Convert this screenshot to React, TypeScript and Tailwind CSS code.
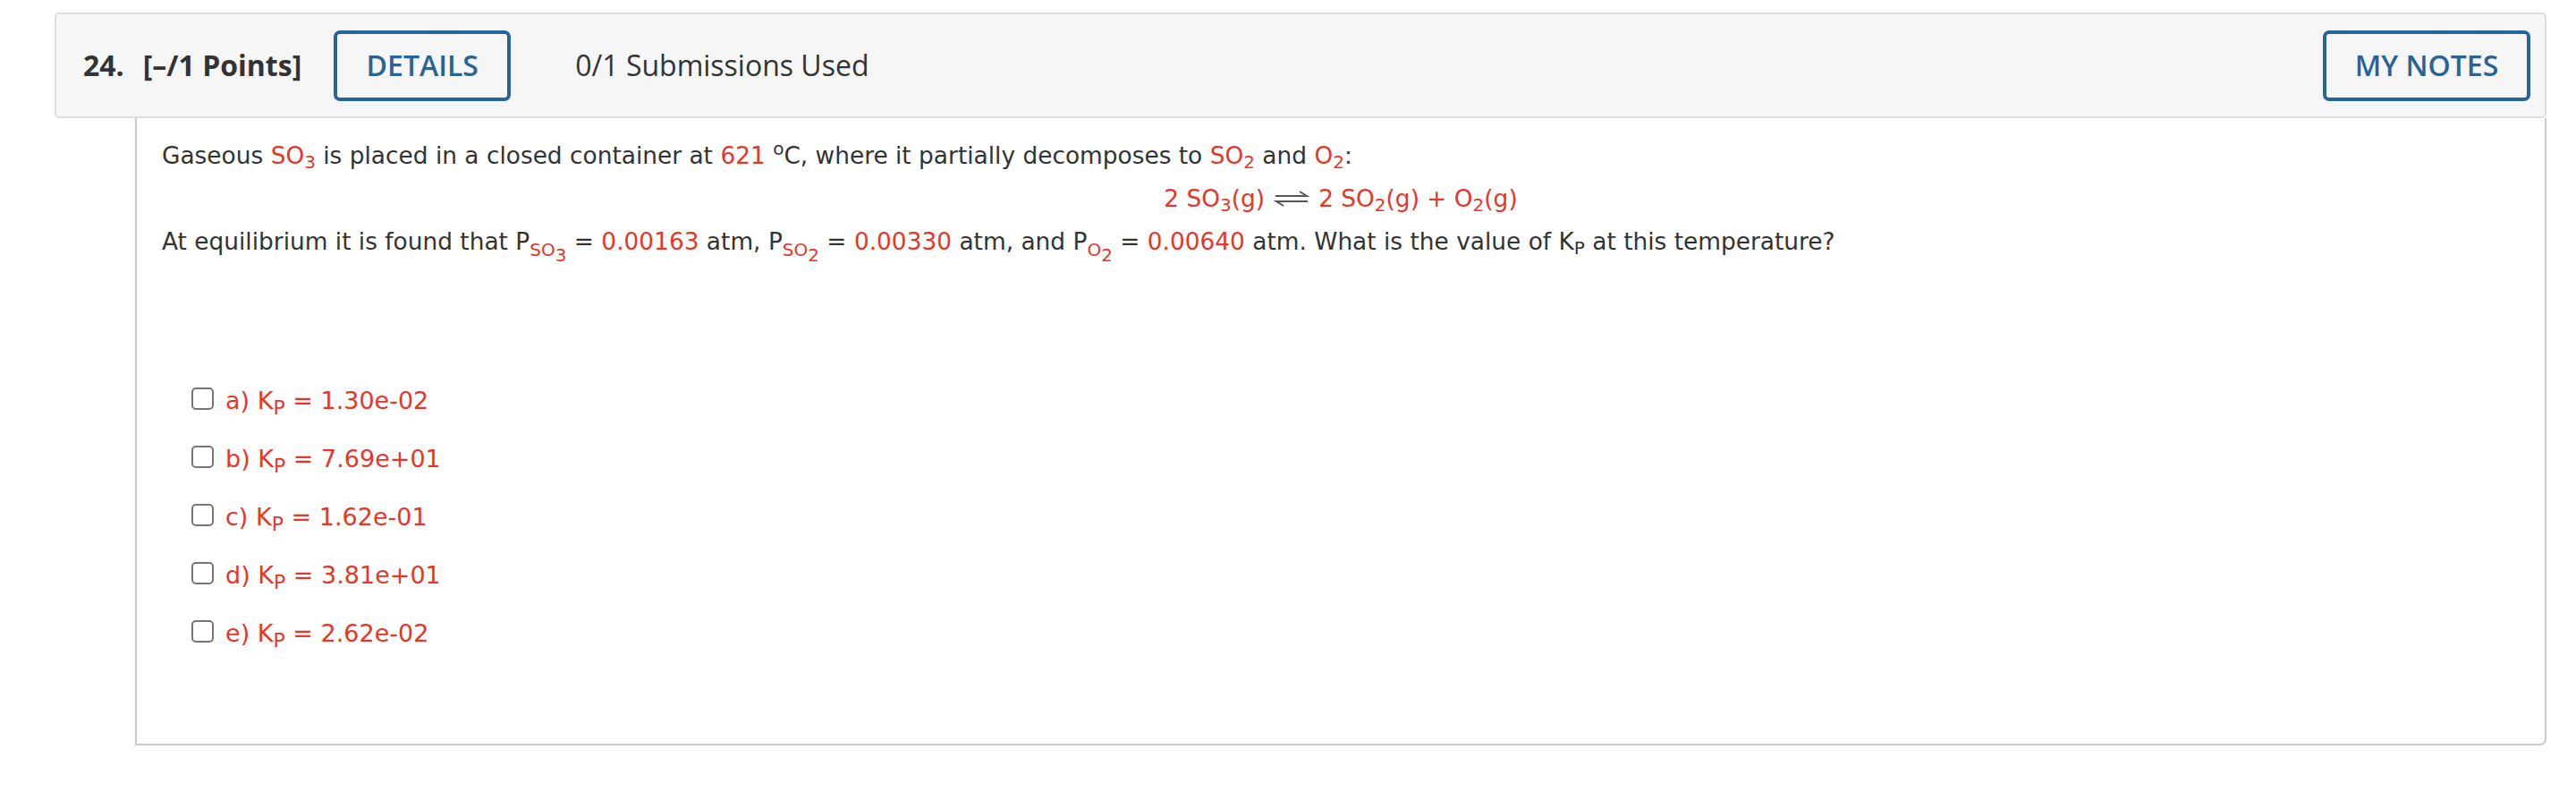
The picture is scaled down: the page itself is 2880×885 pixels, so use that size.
import React from 'react';

const red = 'text-[#e8352a]';

const Sub = ({ children }: { children: React.ReactNode }) => (
    <sub className="-bottom-[5px] text-[20px]">{children}</sub>
);

const Kp = ({ big = false }: { big?: boolean }) => (
    <>K<sub className={big ? '-bottom-[6px] text-[22px]' : '-bottom-[5px] text-[20px]'}>P</sub></>
);

// equilibrium harpoons, drawn since the font glyph is too narrow
const Harpoons = () => (
    <svg width="40" height="18" viewBox="0 0 40 18" className="inline-block align-baseline mx-[10px]" fill="none" stroke="#555" strokeWidth="2">
        <path d="M2 6 H37 L29 1" />
        <path d="M38 12 H3 L11 17" />
    </svg>
);

const options = ['1.30e-02', '7.69e+01', '1.62e-01', '3.81e+01', '2.62e-02'];
const letters = ['a', 'b', 'c', 'd', 'e'];

const OutlineButton = ({ label, width }: { label: string; width: string }) => (
    <button
        className={`${width} h-[79px] flex items-center justify-center border-4 border-[#2a6496] rounded-[7px] text-[#2a6496] text-[32px] font-semibold bg-transparent`}
        style={{ fontFamily: '"Open Sans", sans-serif' }}
    >
        {label}
    </button>
);

export default function App() {
    return (
        <div className="w-full h-[885px] bg-white pt-[14px] pl-[61px] pr-[33px] overflow-hidden">
            {/* question header */}
            <div
                className="h-[118px] flex items-center pl-[30px] pr-[16px] bg-[#f6f6f6] border-2 border-[#dedede] rounded-[5px] text-[#333]"
                style={{ fontFamily: '"Open Sans", sans-serif' }}
            >
                <span className="text-[32px] font-bold">24.</span>
                <span className="text-[32px] font-bold ml-[21px]">[–/1 Points]</span>
                <div className="ml-[36px]">
                    <OutlineButton label="DETAILS" width="w-[198px]" />
                </div>
                <span className="text-[32px] ml-[72px]">0/1 Submissions Used</span>
                <div className="ml-auto">
                    <OutlineButton label="MY NOTES" width="w-[232px]" />
                </div>
            </div>

            {/* question body */}
            <div
                className="ml-[90px] h-[701px] border-2 border-t-0 border-[#cccccc] rounded-br-[7px] pl-[28px] pr-[28px] pt-[18px] text-[26.4px] leading-[48px] text-[#333]"
                style={{ fontFamily: '"DejaVu Sans", Verdana, sans-serif' }}
            >
                <p>
                    Gaseous <span className={red}>SO<Sub>3</Sub></span> is placed in a closed container at{' '}
                    <span className={red}>621</span> <sup className="-top-[10px] text-[20px]">o</sup>C, where it partially decomposes to{' '}
                    <span className={red}>SO<Sub>2</Sub></span> and <span className={red}>O<Sub>2</Sub></span>:
                </p>
                <p className={`text-center ${red}`}>
                    2 SO<Sub>3</Sub>(g)<Harpoons />2 SO<Sub>2</Sub>(g) + O<Sub>2</Sub>(g)
                </p>
                <p>
                    At equilibrium it is found that P
                    <sub className={`-bottom-[7px] text-[20px] ${red}`}>SO<sub className="-bottom-[6px] text-[20px]">3</sub></sub>
                    {' '}= <span className={red}>0.00163</span> atm, P
                    <sub className={`-bottom-[7px] text-[20px] ${red}`}>SO<sub className="-bottom-[6px] text-[20px]">2</sub></sub>
                    {' '}= <span className={red}>0.00330</span> atm, and P
                    <sub className={`-bottom-[7px] text-[20px] ${red}`}>O<sub className="-bottom-[6px] text-[20px]">2</sub></sub>
                    {' '}= <span className={red}>0.00640</span> atm. What is the value of <Kp /> at this temperature?
                </p>

                <ul className="mt-[121px] pl-[33px] flex flex-col">
                    {options.map((value, i) => (
                        <li key={value} className="h-[65px] flex items-center gap-[13px]">
                            <span className="w-[25px] h-[25px] -mt-[4px] border-2 border-[#767676] rounded-[5px] bg-white shrink-0" />
                            <span className={`text-[27px] leading-[30px] ${red}`}>
                                {letters[i]}) <Kp big /> = {value}
                            </span>
                        </li>
                    ))}
                </ul>
            </div>
        </div>
    );
}
